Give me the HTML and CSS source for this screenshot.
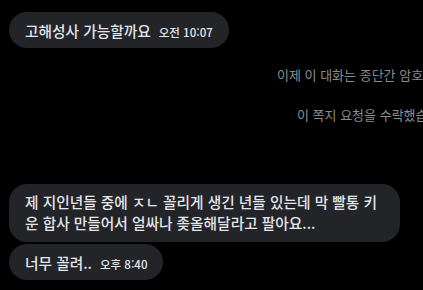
FILE: index.html
```html
<!DOCTYPE html>
<html lang="ko">
<head>
<meta charset="utf-8">
<link rel="stylesheet" href="styles.css">
</head>
<body>
<div class="chat">
  <div class="row">
    <div class="bubble single"><span class="text">고해성사 가능할까요</span><span class="time">오전 10:07</span></div>
  </div>
  <div class="system first">이제 이 대화는 종단간 암호화로 보호됩니다</div>
  <div class="system second">이 쪽지 요청을 수락했습니다</div>
  <div class="row group">
    <div class="bubble multi"><span class="text">제 지인년들 중에 ㅈㄴ 꼴리게 생긴 년들 있는데 막 빨통 키<br>운 합사 만들어서 얼싸나 좆올해달라고 팔아요...</span></div>
  </div>
  <div class="row tight">
    <div class="bubble single"><span class="text">너무 꼴려..</span><span class="time">오후 8:40</span></div>
  </div>
</div>
</body>
</html>
```

FILE: styles.css
```css
html, body {
  margin: 0;
  padding: 0;
  background: #000;
  overflow: hidden;
}
body {
  width: 423px;
  height: 290px;
  font-family: "Noto Sans CJK KR", "Noto Sans", sans-serif;
  color: #e4e6eb;
}
.chat {
  display: flex;
  flex-direction: column;
  padding: 12px 0 0 9px;
}
.row {
  display: flex;
}
.bubble {
  background: #222428;
  border-radius: 18px;
  box-sizing: border-box;
}
.bubble.single {
  height: 36px;
  display: flex;
  align-items: center;
  padding: 0 16px 0 16px;
}
.bubble.multi {
  padding: 7px 23px 9px 16px;
  line-height: 20px;
}
.text {
  font-size: 14.7px;
  font-weight: 500;
  white-space: nowrap;
}
.time {
  font-size: 11.5px;
  font-weight: 500;
  margin-left: 8px;
  padding-top: 3px;
  white-space: nowrap;
}
.system {
  white-space: nowrap;
  font-size: 13px;
  color: #8a8d93;
  line-height: 18px;
}
.system.first {
  margin-top: 18px;
  padding-left: 268px;
}
.system.second {
  margin-top: 22px;
  padding-left: 288px;
}
.group {
  margin-top: 60px;
}
.tight {
  margin-top: 2px;
}
```
